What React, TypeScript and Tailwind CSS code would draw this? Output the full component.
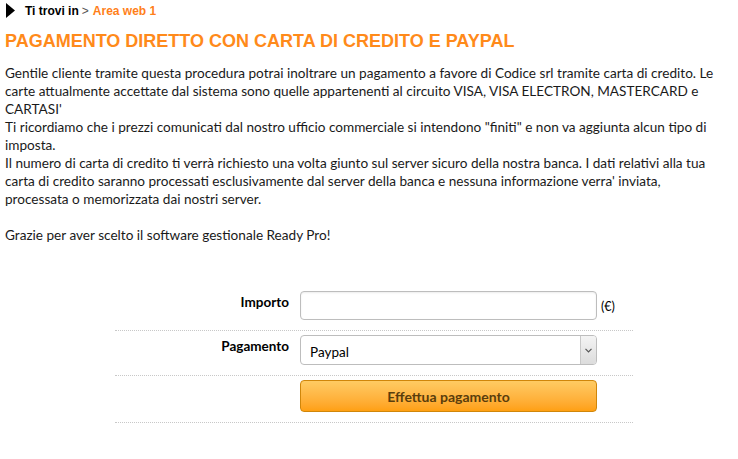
import React from 'react';

const bodyFont = { fontFamily: 'Lato, "Open Sans", sans-serif' };

const Row: React.FC<{ label?: string; children: React.ReactNode }> = ({ label, children }) => (
  <div className="flex border-b border-dotted border-[#c8c8c8] pb-[10px] pt-[4px]">
    <div className="w-[185px] pr-[11px] pt-[1px] text-right text-[13.5px] font-bold text-black">{label}</div>
    <div className="flex flex-1 items-center">{children}</div>
  </div>
);

export default function App() {
  return (
    <div className="h-[459px] w-[738px] bg-white text-[#222]" style={bodyFont}>
      {/* Breadcrumb */}
      <div className="flex h-[20px] items-center pl-[6px] pt-[1px] text-[12px] font-bold" style={{ fontFamily: '"Liberation Sans", Arial, sans-serif' }}>
        <svg width="9" height="15" viewBox="0 0 9 15" className="mr-[10px]">
          <polygon points="0,0 9,7.5 0,15" fill="#000" />
        </svg>
        <span className="text-black">Ti trovi in</span>
        <span className="ml-[3px] font-normal text-[#555]">&gt;</span>
        <span className="ml-[4px] text-[#ff7f1a]">Area web 1</span>
      </div>

      {/* Title */}
      <h1
        className="mt-[11px] pl-[5px] text-[18px] font-bold leading-[20px] text-[#ff8a1a]"
        style={{ fontFamily: '"Liberation Sans", Arial, sans-serif' }}
      >
        PAGAMENTO DIRETTO CON CARTA DI CREDITO E PAYPAL
      </h1>

      {/* Text */}
      <div className="mt-[13px] whitespace-nowrap pl-[5px] text-[13.6px] leading-[18px] text-[#1a1a1a]">
        Gentile cliente tramite questa procedura potrai inoltrare un pagamento a favore di Codice srl tramite carta di credito. Le
        <br />
        carte attualmente accettate dal sistema sono quelle appartenenti al circuito VISA, VISA ELECTRON, MASTERCARD e
        <br />
        CARTASI'
        <br />
        Ti ricordiamo che i prezzi comunicati dal nostro ufficio commerciale si intendono "finiti" e non va aggiunta alcun tipo di
        <br />
        imposta.
        <br />
        Il numero di carta di credito ti verrà richiesto una volta giunto sul server sicuro della nostra banca. I dati relativi alla tua
        <br />
        carta di credito saranno processati esclusivamente dal server della banca e nessuna informazione verra' inviata,
        <br />
        processata o memorizzata dai nostri server.
        <br />
        <br />
        Grazie per aver scelto il software gestionale Ready Pro!
      </div>

      {/* Form */}
      <div className="ml-[115px] mt-[43px] w-[518px]">
        <Row label="Importo">
          <input
            type="text"
            className="h-[29px] w-[297px] rounded-[4px] border border-[#bdbdbd] bg-white px-2 text-[13px] shadow-[inset_0_1px_2px_rgba(0,0,0,0.08)] outline-none"
          />
          <span className="ml-[4px] mt-[4px] text-[12.5px] text-black">(€)</span>
        </Row>
        <Row label="Pagamento">
          <div className="relative h-[30px] w-[297px] rounded-[4px] border border-[#bdbdbd] bg-white">
            <span className="absolute left-[9px] top-[6px] text-[13.5px] text-black">Paypal</span>
            <div className="absolute right-0 top-0 flex h-full w-[16px] items-center justify-center rounded-r-[3px] border-l border-[#c8c8c8] bg-gradient-to-b from-[#f4f4f4] to-[#dcdcdc]">
              <svg width="7" height="5" viewBox="0 0 7 5">
                <polyline points="0.5,0.8 3.5,3.8 6.5,0.8" fill="none" stroke="#555" strokeWidth="1.2" />
              </svg>
            </div>
          </div>
        </Row>
        <Row>
          <button className="h-[32px] w-[297px] rounded-[4px] border border-[#d0860a] bg-gradient-to-b from-[#ffcb62] to-[#ffa010] text-[14px] font-bold text-[#5a3d0c]">
            Effettua pagamento
          </button>
        </Row>
      </div>
    </div>
  );
}
